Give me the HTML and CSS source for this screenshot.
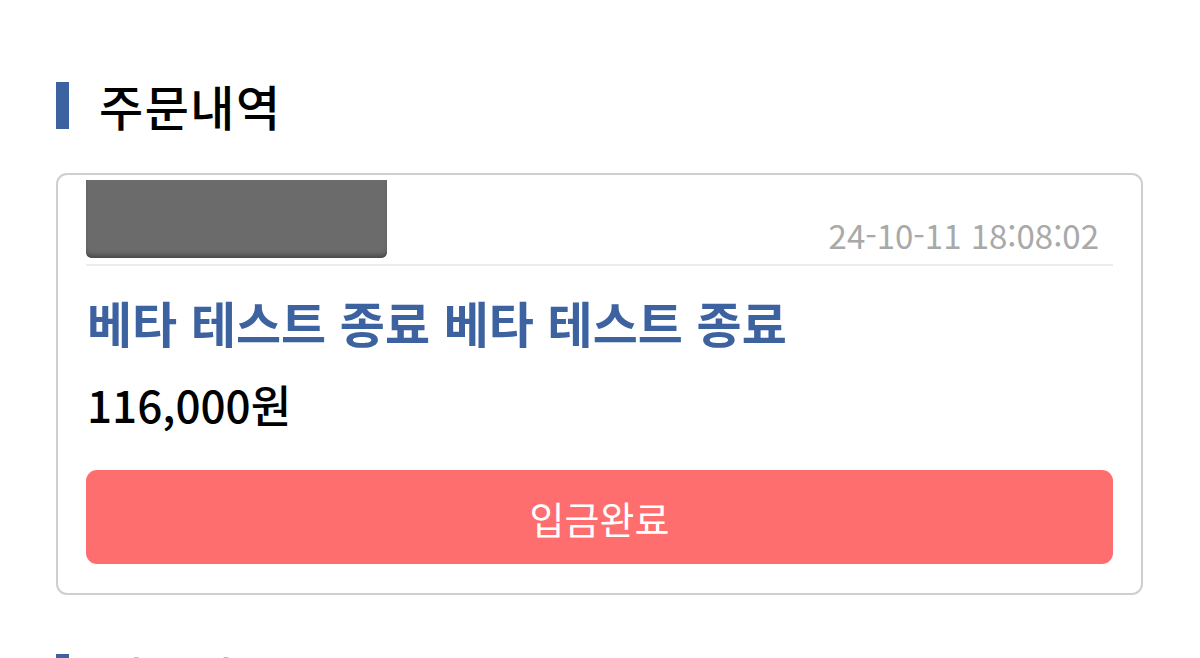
FILE: index.html
```html
<!DOCTYPE html>
<html lang="ko">
<head>
<meta charset="utf-8">
<link rel="stylesheet" href="styles.css">
</head>
<body>
<div class="page">
  <section class="section">
    <h2 class="section-title"><span class="bar"></span>주문내역</h2>
    <div class="card">
      <div class="card-head">
        <div class="thumb"></div>
        <div class="date">24-10-11 18:08:02</div>
      </div>
      <div class="product">베타 테스트 종료 베타 테스트 종료</div>
      <div class="price">116,000원</div>
      <button class="status">입금완료</button>
    </div>
  </section>
  <section class="section">
    <h2 class="section-title"><span class="bar"></span>배송지 정보</h2>
  </section>
</div>
</body>
</html>
```
FILE: styles.css
```css
* { box-sizing: border-box; }
html, body { margin: 0; padding: 0; background: #fff; }
body { font-family: "Noto Sans CJK KR", "Noto Sans", sans-serif; color: #000; overflow: hidden; height: 658px; }
.page { padding: 68px 57px 0 56px; }
.section-title {
  display: flex; align-items: center; gap: 30px;
  margin: 0; font-size: 48px; font-weight: 500; line-height: 74px; letter-spacing: 1.5px;
}
.bar { width: 13px; height: 47px; background: #3d62a0; flex: none; }
.card {
  margin-top: 31px; border: 2px solid #cfcfcf; border-radius: 11px;
  padding: 5px 28px 29px 28px;
}
.card-head {
  display: flex; justify-content: space-between; align-items: flex-end;
  padding-bottom: 6px; border-bottom: 2px solid #ececec;
}
.thumb {
  width: 301px; height: 78px; background: #6b6b6c;
  border-radius: 0 0 6px 6px;
  box-shadow: inset 0 -5px 4px -2px #4a4a4e;
}
.date { color: #a9a9a9; font-size: 33px; line-height: 36px; padding-right: 14px; padding-bottom: 5px; }
.product { color: #3d62a0; font-weight: 700; font-size: 49px; line-height: 60px; margin-top: 26px; padding-left: 1px; }
.price { font-size: 44px; font-weight: 500; line-height: 50px; margin-top: 27px; padding-left: 1px; }
.status {
  display: block; width: 100%; margin-top: 41px; height: 94px;
  border: 0; border-radius: 11px; background: #ff6e6e; color: #fff;
  font-family: inherit; font-size: 38px; font-weight: 400;
}
.section + .section { margin-top: 45px; }
```
